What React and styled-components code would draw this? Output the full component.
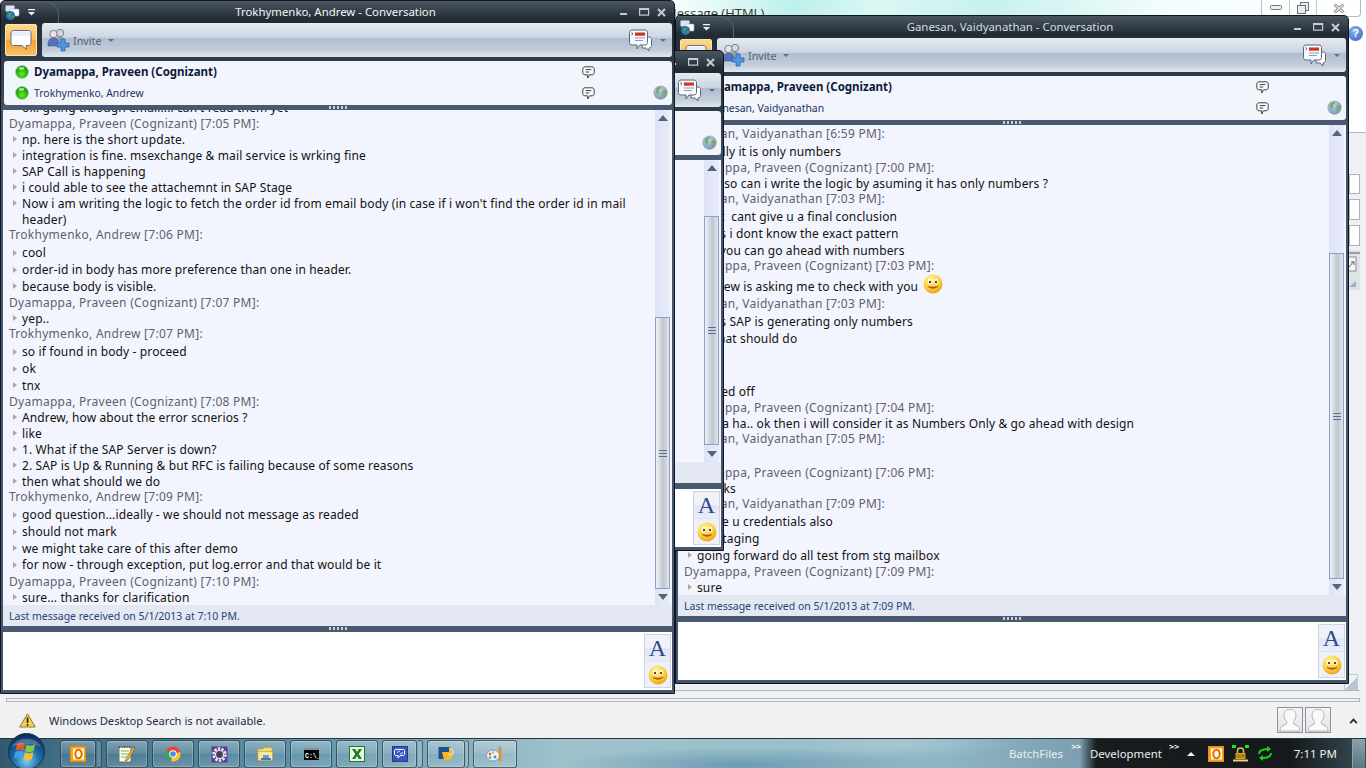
import React from "react";
import styled, { createGlobalStyle } from "styled-components";

const Global = createGlobalStyle`
  html, body { margin: 0; padding: 0; background: #f0f1f3; overflow: hidden; }
  * { box-sizing: border-box; }
  body { font-family: "Noto Sans", "DejaVu Sans", sans-serif; font-size: 12px; }
`;

const Desktop = styled.div`
  width: 1366px; height: 768px; display: flex; flex-direction: column; overflow: hidden;
`;
const Stage = styled.div`
  position: relative; height: 694px; display: flex; flex-direction: column; background: #eef0f3;
`;
const BackHeader = styled.header`
  height: 43px; display: flex; justify-content: space-between; align-items: flex-start;
  background: linear-gradient(100deg, #ffffff 48%, #bdf0ec 58%, #dcf8f5 64%, #c7f1ee 72%, #f2fdfc 85%, #ffffff 100%);
`;
const BackTitle = styled.span`
  margin: 4px 0 0 665px; font: 13px "Open Sans", sans-serif; color: #333;
`;
const BackControls = styled.div`
  display: flex; margin-right: 5px; height: 17px; border: 1px solid #b6bcc4; border-top: 0; border-radius: 0 0 4px 4px;
  background: rgba(255,255,255,.45);
`;
const BackControl = styled.span`
  width: ${p => p.$w}px; display: flex; align-items: center; justify-content: center;
  border-left: ${p => (p.$first ? "0" : "1px solid #c2c8cf")};
`;
const BackHelp = styled.div`
  display: flex; justify-content: flex-end; height: 90px; padding: 0 3px 0 0; background: #fff; border-bottom: 1px solid #b3b8bd;
`;
const HelpDot = styled.span`
  margin-top: -17px; width: 15px; height: 15px; border-radius: 50%; color: #fff; font: bold 11px/15px "Liberation Sans", sans-serif;
  text-align: center; background: radial-gradient(circle at 40% 30%, #8fb3ee, #2f5fbd);
`;
const BackFields = styled.div`
  flex: 1; display: flex; flex-direction: column; align-items: flex-end; gap: 5px; padding: 41px 6px 0 0;
`;
const BackField = styled.span`
  width: 11px; height: ${p => p.$h}px; background: #fff; border: 1px solid #aeb2b6;
`;
const BackTool = styled.span`
  display: flex; width: 12px; height: 40px; margin-top: -1px;
`;
const BackCorner = styled.div`
  display: flex; justify-content: flex-end; align-items: flex-end; padding: 0 2px 0 0; height: 18px; border-bottom: 1px solid #b0b5ba; margin: 0 6px 3px 0;
`;
const CornerBtn = styled.span`
  width: 14px; height: 16px; background: linear-gradient(135deg, #eef0f3 55%, #b9c4d6 56%); border: 1px solid #c4c8cd;
`;

/* Conversation window */
const Win = styled.section`
  position: absolute; left: ${p => p.$left}px; top: ${p => p.$top}px; width: ${p => p.$w}px; height: ${p => p.$h}px;
  z-index: ${p => p.$z}; display: flex; flex-direction: column; padding: 0 2px 3px;
  border: 1px solid #10151b; border-radius: 5px 5px 0 0;
  background: linear-gradient(#4a5661 0, #232c34 18px, #2b3744 50px, #44556d 120px, #44556d 100%);
`;
const TitleBar = styled.div`
  height: 22px; display: grid; grid-template-columns: 1fr auto 1fr; align-items: center; color: #fff; position: relative;
`;
const TitleLeft = styled.div`
  display: flex; align-items: center; gap: 7px; padding-left: 2px; height: 22px; width: 56px;
  border-right: 1px solid #55616d; border-top: 1px solid #55616d; border-radius: 0 14px 0 0; border-bottom: 0;
`;
const TitleText = styled.span`
  font-size: 11.4px; margin: 0 4px 2px 0; color: ${p => (p.$dim ? "#d5dbe2" : "#f4f6f8")};
`;
const Controls = styled.div`
  display: flex; justify-content: flex-end; align-items: center; gap: 7px; padding-right: 6px;
  & > :first-child { margin-right: 4px; }
`;
const ToolRow = styled.div`
  height: 34px; display: flex; gap: 5px; padding-left: 2px;
`;
const OrangeBtn = styled.button`
  width: 32px; height: 32px; margin-top: 1px; padding: 0; border: 1px solid #f9e4b8; border-radius: 2px; display: flex; align-items: center; justify-content: center;
  background: linear-gradient(#fdd78f 0, #fbc05a 45%, #f6a22c 55%, #f9c068 100%);
`;
const ToolBar = styled.div`
  flex: 1; display: flex; align-items: center; padding: 0 6px 0 5px; border-radius: 3px;
  background: linear-gradient(#e6ebf2 0, #ccd5e1 42%, #b0bdce 46%, #c3cedb 80%, #e2e7ee 100%);
`;
const InviteLabel = styled.span`
  margin: 0 6px 0 3px; color: #566272; font-size: 10.8px;
`;
const Spacer = styled.span` flex: 1; `;
const Caret = styled.span`
  width: 0; height: 0; border-left: 3px solid transparent; border-right: 3px solid transparent; border-top: 3px solid ${p => p.$c || "#5f6f86"};
`;
const LogBtn = styled.span` display: flex; margin-right: 7px; `;
const Participants = styled.div`
  height: 44px; margin: 4px 0 0 1px; display: flex; background: #f3f5fd; border-radius: 3px; padding: 0 4px 2px 11px; align-items: flex-end;
`;
const PList = styled.div`
  flex: 1; padding: 0 58px 0 0; display: flex; flex-direction: column;
`;
const PRow = styled.div`
  height: 21px; display: flex; align-items: center; gap: 5px;
`;
const PName = styled.span`
  flex: 1; font-size: ${p => (p.$b ? "11.5px" : "10.4px")}; font-weight: ${p => (p.$b ? 700 : 400)}; color: ${p => (p.$b ? "#0e1a3c" : "#22325e")};
`;
const BubbleWrap = styled.span` display: flex; margin-top: 2px; `;
const GlobeWrap = styled.span` display: flex; margin-bottom: 3px; `;
const Grabber = styled.div`
  height: ${p => p.$h}px; display: flex; justify-content: center; background: #49596f;
`;
const GrabDots = styled.span`
  width: 18px; height: 3px; margin-top: 1px;
  background: repeating-linear-gradient(90deg, #c6cfdb 0 2px, transparent 2px 4px);
`;
const Transcript = styled.div`
  flex: 1; min-height: 0; display: flex; background: #f3f5fe; padding-right: 2px;
`;
const Lines = styled.div`
  flex: 1; min-width: 0; overflow: hidden; display: flex; flex-direction: column; justify-content: flex-end; padding-left: 6px;
`;
const Sender = styled.div`
  flex: none; height: ${p => p.$h}px; line-height: ${p => (p.$h === 16 ? 16 : 15)}px; font-size: 12px; letter-spacing: .27px; color: #5f5f6e; white-space: nowrap;
  padding-top: ${p => (p.$h === 16 ? 1 : 0)}px;
`;
const Line = styled.div`
  flex: none; height: ${p => p.$h}px; display: flex; align-items: center; padding-left: 13px; white-space: pre; color: #111; font-size: 12px; letter-spacing: .125px;
  position: relative; gap: 3px;
  &::before {
    content: ""; position: absolute; left: 4px; top: 50%; margin-top: -3px; display: ${p => (p.$cont ? "none" : "block")};
    border-left: 4px solid #a3a7ae; border-top: 3px solid transparent; border-bottom: 3px solid transparent;
  }
`;
const Scroll = styled.div`
  flex: none; width: 15px; display: flex; flex-direction: column; align-items: stretch;
  background: linear-gradient(90deg, #dde3f6, #e9ecf9);
`;
const ScrollArrow = styled.span`
  flex: none; height: 16px; display: flex; align-items: center; justify-content: center;
`;
const Tri = styled.span`
  width: 0; height: 0; border-left: 5px solid transparent; border-right: 5px solid transparent;
  ${p => (p.$up ? "border-bottom: 6px solid #56647a;" : "border-top: 6px solid #56647a;")}
`;
const Thumb = styled.div`
  margin-top: ${p => p.$top}px; height: ${p => p.$h}px; border: 1px solid #8c9fc6; display: flex; align-items: center; justify-content: center;
  background: linear-gradient(90deg, #f0f1f4, #c9ced8 45%, #c1c7d2 60%, #e4e6ec);
`;
const Grip = styled.span`
  width: 8px; height: 7px; background: repeating-linear-gradient(#5d6c96 0 1px, transparent 1px 3px);
`;
const ScrollFill = styled.span` flex: 1; `;
const StatusBar = styled.div`
  height: 21px; display: flex; align-items: center; padding-left: 6px; background: #e3e8f3; color: #2b4275; font-size: 10.5px;
`;
const InputBox = styled.div`
  height: 58px; flex: none; display: flex; justify-content: flex-end; align-items: center; padding-right: 1px; background: #fff;
`;
const SideTools = styled.div`
  width: 27px; height: 54px; display: flex; flex-direction: column; border: 1px solid #cfd4e3; background: #eef1fb;
`;
const SideA = styled.span`
  height: 27px; display: flex; align-items: center; justify-content: center; color: #2f4a8c;
  font: 24px/27px "Liberation Serif", serif; border-bottom: 1px solid #dfe3f0;
  background: linear-gradient(#f0f2fb 0, #f0f2fb 50%, #e2e5f4 52%, #eaedf8 100%);
`;
const SideSmile = styled.span`
  flex: 1; display: flex; align-items: center; justify-content: center;
`;
const InlineSmile = styled.span` display: inline-flex; margin-left: 2px; margin-top: -4px; `;

/* Notification bar */
const Notify = styled.div`
  height: 44px; position: relative; display: flex; align-items: center; padding: 8px 9px 0 19px; background: #f0f1f3;
`;
const NotifyRule = styled.span`
  position: absolute; left: 6px; right: 6px; top: 4px; height: 4px; background: #eceef0; border: 1px solid #b3b8bd;
`;
const NotifyText = styled.span`
  margin-left: 13px; flex: 1; font-size: 11.2px; color: #1f2b4a;
`;
const Avatar = styled.span`
  width: 26px; height: 26px; margin-left: 2px; display: flex; border: 1px solid #8e9296; background: linear-gradient(#f4f5f6, #e2e3e5);
`;
const Chevron = styled.span`
  margin: 0 0 0 19px; width: 7px; height: 7px; border-left: 2px solid #222; border-top: 2px solid #222; transform: translateY(2px) rotate(45deg) scale(.8);
`;

/* Taskbar */
const Taskbar = styled.footer`
  height: 30px; display: flex; align-items: stretch; padding-left: 8px; border-top: 1px solid #28333a; position: relative;
  background:
    radial-gradient(ellipse 180px 18px at 740px 26px, rgba(70,125,160,.55), transparent),
    radial-gradient(ellipse 120px 14px at 900px 5px, rgba(200,225,230,.4), transparent),
    linear-gradient(90deg, #33596c 0, #3f6f86 60px, #5f93ab 300px, #9fc2cb 560px, #9cc0cb 760px, #8db4c3 950px, #7d9fb1 1080px, #171c1e 1096px, #15191b 1290px, #2e3f45 1345px, #3c565f 1366px);
`;
const Orb = styled.span`
  flex: none; position: relative; z-index: 2; width: 37px; height: 37px; margin: -6px 15px -1px 0; display: flex;
`;
const TaskBtn = styled.span`
  flex: none; width: ${p => p.$w}px; margin: 1px 4px 0 0; display: flex; align-items: center; justify-content: center;
  border: 1px solid rgba(20,40,50,.65); border-radius: 3px;
  background: linear-gradient(rgba(255,255,255,.32), rgba(255,255,255,.12) 48%, rgba(255,255,255,.04) 52%, rgba(255,255,255,.16));
  box-shadow: inset 0 0 0 1px rgba(255,255,255,.22);
`;
const Sliver = styled.span`
  flex: none; width: ${p => p.$w}px; margin: 1px 4px 0 -3px; border: 1px solid rgba(20,40,50,.6); border-left: 0; border-radius: 0 3px 3px 0;
  background: rgba(255,255,255,.16);
`;
const Tray = styled.div`
  margin-left: auto; display: flex; align-items: center; color: #e8eef1; font-size: 11.4px;
`;
const Band = styled.span``;
const More = styled.span`
  align-self: flex-start; width: 8px; margin: 3px ${p => p.$r}px 0 ${p => p.$l}px; font: bold 7px/10px "DejaVu Sans", sans-serif; color: #fff; letter-spacing: -1px; white-space: nowrap;
`;
const TrayIcon = styled.span` display: flex; margin-left: ${p => p.$l}px; `;
const TrayUp = styled.span`
  width: 0; height: 0; border-left: 4px solid transparent; border-right: 4px solid transparent; border-bottom: 4px solid #f2f4f5;
`;
const Clock = styled.span` margin-left: 21px; font-size: 11.5px; color: #eef2f4; `;
const ShowDesktop = styled.span`
  width: 14px; height: 100%; margin-left: 15px; border-left: 1px solid #8da4ad; border-right: 1px solid #3b4d55;
  background: linear-gradient(rgba(210,230,235,.55), rgba(120,160,175,.5));
`;

/* Icons */
const Smiley = ({ s = 20 }) => (
  <svg width={s} height={s} viewBox="0 0 20 20">
    <defs>
      <radialGradient id="smy" cx=".4" cy=".3" r=".8">
        <stop offset="0" stopColor="#fff59a" /><stop offset=".55" stopColor="#fbd23a" /><stop offset="1" stopColor="#e8920f" />
      </radialGradient>
    </defs>
    <circle cx="10" cy="10" r="9.5" fill="url(#smy)" />
    <ellipse cx="6.8" cy="7.4" rx="2" ry="2.6" fill="#fff" /><ellipse cx="13.2" cy="7.4" rx="2" ry="2.6" fill="#fff" />
    <circle cx="7" cy="8" r="1.2" fill="#6b3a10" /><circle cx="13" cy="8" r="1.2" fill="#6b3a10" />
    <path d="M4.4 11.5c1 4.2 10.2 4.2 11.2 0-2 1.6-9.2 1.6-11.2 0z" fill="#b5561a" />
  </svg>
);
const Dot = () => (
  <svg width="14" height="14" viewBox="0 0 14 14">
    <defs>
      <radialGradient id="grn" cx=".5" cy=".65" r=".6">
        <stop offset="0" stopColor="#6fe82c" /><stop offset=".7" stopColor="#1fb00a" /><stop offset="1" stopColor="#0f8206" />
      </radialGradient>
    </defs>
    <circle cx="7" cy="7" r="6.5" fill="url(#grn)" stroke="#a8dc98" strokeWidth=".8" />
    <ellipse cx="6.5" cy="3.4" rx="3" ry="1.4" fill="#d8f7c8" opacity=".75" />
  </svg>
);
const SmallBubble = () => (
  <svg width="13" height="13" viewBox="0 0 13 13" fill="none" stroke="#3e4144" strokeWidth="1">
    <path d="M3 .8h7c1.3 0 2.2.9 2.2 2.2v3.6c0 1.3-.9 2.2-2.2 2.200H7.600L5.700 12V8.800H3C1.700 8.800.8 7.900.8 6.600V3C.8 1.700 1.700.8 3 .8z" fill="#fbfcfe" />
    <path d="M3.600 3.600h5.800M3.600 6h3.600" />
  </svg>
);
const Globe = ({ s = 15 }) => (
  <svg width={s} height={s} viewBox="0 0 16 16">
    <defs>
      <radialGradient id="glb" cx=".4" cy=".3" r=".8">
        <stop offset="0" stopColor="#c3d3e8" /><stop offset="1" stopColor="#6f8fb4" />
      </radialGradient>
    </defs>
    <circle cx="8" cy="8" r="7.600" fill="url(#glb)" />
    <path d="M3 4c2-2 4-2.500 6-2.500L8 4 6 5.500l1 2-2 3-2-2.500zM10 6l4-1 1 3-2 4-2 1-1-3z" fill="#7fa96e" />
  </svg>
);
const AppIcon = () => (
  <svg width="16" height="16" viewBox="0 0 16 16">
    <rect x="0.500" y="0.500" width="9" height="6" rx="1" fill="#dfe6ee" stroke="#8fa0b4" strokeWidth=".6" />
    <rect x="5" y="4" width="9" height="7" rx="1" fill="#fafcff" stroke="#9fb0c4" strokeWidth=".6" />
    <circle cx="5.500" cy="10.500" r="4.500" fill="#2a6cc4" />
    <path d="M3 8.500l3-1 1 2-2 2 1 2-2-1zM7 11l2-.5v2l-1.500 1.200z" fill="#3fae3a" />
  </svg>
);
const MenuGlyph = () => (
  <svg width="7" height="9" viewBox="0 0 7 9" fill="#eef2f5"><rect x="0" y="1" width="7" height="1.300" /><path d="M0 4h7L3.500 7.500z" /></svg>
);
const Speech = () => (
  <svg width="22" height="22" viewBox="0 0 22 22">
    <path d="M3.500 1.500h15c1.400 0 2.500 1.100 2.500 2.500v10c0 1.400-1.100 2.500-2.500 2.500H16l.5 4-4.500-4H3.500C2.100 16.500 1 15.400 1 14V4c0-1.400 1.100-2.500 2.500-2.500z" fill="#fff" stroke="#5f7188" strokeWidth="1" />
    <path d="M3.500 2.500h15c.8 0 1.500.7 1.500 1.500v3H2V4c0-.8.7-1.500 1.500-1.500z" fill="#e8eef8" />
  </svg>
);
const Invite = () => (
  <svg width="23" height="24" viewBox="0 0 23 24">
    <circle cx="13" cy="5" r="3.700" fill="#d4d8dc" stroke="#6d7680" strokeWidth=".9" />
    <path d="M8 15c0-4 2-5.500 5-5.500s5 1.500 5 5v2H8z" fill="#9aa3ad" stroke="#6d7680" strokeWidth=".6" />
    <circle cx="6.500" cy="6" r="3.700" fill="#e2e5e8" stroke="#6d7680" strokeWidth=".9" />
    <path d="M1 17c0-4.500 2-7 5.500-7s5.500 2.500 5.500 7v1H1z" fill="#5672b4" stroke="#3e5590" strokeWidth=".6" />
    <path d="M14 11h4v4h4v4h-4v4h-4v-4h-4v-4h4z" fill="#4f95e0" stroke="#2b66b2" strokeWidth=".8" />
  </svg>
);
const LogIcon = () => (
  <svg width="24" height="23" viewBox="0 0 24 23">
    <path d="M14 8h6c1.500 0 2.500 1 2.500 2.500v6c0 1.500-1 2.500-2.500 2.500v3l-3-3h-4z" fill="#fff" stroke="#56687f" />
    <path d="M3 1h13c1.500 0 2.500 1 2.500 2.500v10c0 1.500-1 2.500-2.500 2.500h-5l-3 4v-4H3c-1.500 0-2.500-1-2.500-2.500v-10C.5 2 1.500 1 3 1z" fill="#f6f8fd" stroke="#56687f" />
    <rect x="6" y="3.500" width="10" height="3.200" fill="#c9391e" />
    <path d="M6 9h10M6 11.500h8" stroke="#8c9cc0" />
    <path d="M2.500 3.500l1.500 1.200-1.500 1.200" fill="none" stroke="#333" strokeWidth=".8" />
  </svg>
);
const MinI = () => <svg width="8" height="8" viewBox="0 0 8 8"><rect y="5" width="7" height="2" fill="#c6ccd3" /></svg>;
const MaxI = () => <svg width="11" height="8" viewBox="0 0 11 8" fill="none"><rect x=".6" y=".6" width="9" height="6.500" stroke="#c6ccd3" strokeWidth="1.200" /><rect x="0" y="0" width="10" height="2" fill="#c6ccd3" /></svg>;
const CloseI = () => <svg width="9" height="9" viewBox="0 0 9 9"><path d="M1 1l7 7M8 1L1 8" stroke="#c6ccd3" strokeWidth="2" /></svg>;
const Warn = () => (
  <svg width="17" height="15" viewBox="0 0 17 15">
    <path d="M8.500.8L16.300 14H.7z" fill="#f6cf4e" stroke="#8a7a3a" strokeWidth="1" strokeLinejoin="round" />
    <rect x="7.700" y="4.500" width="1.700" height="5.500" fill="#222" /><rect x="7.700" y="11" width="1.700" height="1.700" fill="#222" />
  </svg>
);
const Person = () => (
  <svg width="24" height="24" viewBox="0 0 24 24">
    <path d="M2 23c0-4 3-5.500 6.500-7v-2.500C6.500 11 6 9 6 7c0-3.500 2.500-5.500 6-5.500S18 3.500 18 7c0 2-.5 4-2.500 6.500V16c3.500 1.500 6.500 3 6.500 7z" fill="#fafafa" stroke="#b4b6b9" />
  </svg>
);
const StartOrb = () => (
  <svg width="37" height="37" viewBox="0 0 37 37">
    <defs>
      <radialGradient id="orb" cx=".5" cy=".75" r=".7">
        <stop offset="0" stopColor="#7fd0f2" /><stop offset=".5" stopColor="#1f6fb0" /><stop offset="1" stopColor="#0c2f5a" />
      </radialGradient>
    </defs>
    <circle cx="18.500" cy="18.500" r="18" fill="url(#orb)" stroke="#16344c" strokeWidth="1" />
    <path d="M9 11c3-1.500 5-1.500 8 0l-1.400 6.500c-3-1.500-5-1.500-8 0z" fill="#e8562a" />
    <path d="M18.500 11.500c3 1.500 5 1.500 8.500 0l-1.400 6.500c-3.500 1.500-5.500 1.500-8.500 0z" fill="#8cc63f" />
    <path d="M7.300 19c3-1.500 5-1.500 8 0L14 25.500c-3-1.500-5-1.500-8 0z" fill="#3aa4e8" />
    <path d="M16.800 19.500c3 1.500 5 1.500 8.500 0L24 26c-3.500 1.500-5.500 1.500-8.500 0z" fill="#f9c21d" />
    <path d="M4 14c4-11 25-11 29 0-8-4-21-4-29 0z" fill="#fff" opacity=".22" />
  </svg>
);
const Outlook = ({ s = 16 }) => (
  <svg width={s} height={s} viewBox="0 0 16 16">
    <rect x=".5" y=".5" width="15" height="15" fill="#f9a51a" stroke="#e98a0a" />
    <rect x="3" y="2.500" width="11" height="11" fill="#fff7e0" />
    <ellipse cx="8.500" cy="8" rx="3.200" ry="4.300" fill="none" stroke="#d96f0a" strokeWidth="2" />
  </svg>
);
const Notepad = () => (
  <svg width="18" height="18" viewBox="0 0 18 18">
    <rect x="1" y="2" width="12" height="15" fill="#fafcf2" stroke="#6c7560" />
    <path d="M3 6h8M3 9h8M3 12h6" stroke="#7ab648" />
    <path d="M1.500 1v2M4 1v2M6.500 1v2M9 1v2M11.500 1v2" stroke="#555" />
    <path d="M8 14l7-12 2 1-7 12-3 1z" fill="#f2b13a" stroke="#8c5a12" strokeWidth=".6" />
    <path d="M15 2l.6-1 1.800 1-.5 1z" fill="#d43a2a" />
  </svg>
);
const Chrome = () => (
  <svg width="16" height="16" viewBox="0 0 16 16">
    <circle cx="8" cy="8" r="7.500" fill="#e8443a" />
    <path d="M8 8L1.200 4.500A7.500 7.500 0 0 0 6 15.300z" fill="#3aa655" />
    <path d="M8 8l7.200-2A7.500 7.500 0 0 1 6 15.300z" fill="#fbc72d" />
    <circle cx="8" cy="8" r="3.800" fill="#fff" /><circle cx="8" cy="8" r="2.800" fill="#4a8af0" />
  </svg>
);
const Gear = () => (
  <svg width="17" height="17" viewBox="0 0 17 17">
    <rect x=".5" y=".5" width="16" height="16" fill="#5a3c96" />
    <circle cx="8.500" cy="8.500" r="6" fill="none" stroke="#eee" strokeWidth="2.500" strokeDasharray="2.400 1.300" />
    <circle cx="8.500" cy="8.500" r="4.600" fill="#eee" /><circle cx="8.500" cy="8.500" r="3.400" fill="#3f3f5a" />
  </svg>
);
const Folder = () => (
  <svg width="17" height="16" viewBox="0 0 17 16">
    <path d="M1 3h5l1.500-1.500H15V14H1z" fill="#f4d978" stroke="#c4a23c" strokeWidth=".7" />
    <path d="M1 5.500h14.500V14.500H1z" fill="#fae79a" stroke="#c4a23c" strokeWidth=".7" />
    <rect x="6" y="9" width="6" height="4" fill="#5aa2d8" /><rect x="4" y="12" width="10" height="2" fill="#3a7fb8" />
  </svg>
);
const Cmd = () => (
  <svg width="15" height="12" viewBox="0 0 15 12">
    <rect width="15" height="12" fill="#050505" /><rect width="15" height="2" fill="#8a9099" />
    <text x="1" y="9.500" fontSize="6.500" fontFamily="Liberation Mono, monospace" fontWeight="700" fill="#fff">C:\_</text>
  </svg>
);
const Excel = () => (
  <svg width="16" height="16" viewBox="0 0 16 16">
    <rect x=".5" y=".5" width="15" height="15" fill="#e9f3e6" stroke="#1f7a2e" />
    <path d="M3 3h3.200L8 6l1.800-3H13L9.700 8 13 13H9.800L8 10l-1.800 3H3l3.300-5z" fill="#1f7a2e" />
  </svg>
);
const Comm = () => (
  <svg width="16" height="16" viewBox="0 0 16 16">
    <rect x=".5" y=".5" width="15" height="15" fill="#3a56bf" stroke="#25398c" />
    <path d="M4 3.500h7c1 0 1.500.5 1.500 1.500v3c0 1-.5 1.500-1.500 1.500H8L6 12V9.500H4C3 9.500 2.500 9 2.500 8V5C2.500 4 3 3.500 4 3.500z" fill="none" stroke="#fff" />
    <path d="M5 6.500l3-1.500M11 6.500L8 8" stroke="#cfe0ff" />
  </svg>
);
const Plug = () => (
  <svg width="16" height="16" viewBox="0 0 16 16">
    <rect x=".5" y="1" width="11" height="12" fill="#1d4f8f" />
    <path d="M4 6h7V2l4 1v6c0 3-2 5-6 5H6z" fill="#f7b91e" />
    <path d="M11 3a3 3 0 1 1-1 5" fill="none" stroke="#ddd" strokeWidth="1.200" />
  </svg>
);
const Palette = () => (
  <svg width="18" height="16" viewBox="0 0 18 16">
    <ellipse cx="7" cy="9.500" rx="6.500" ry="5.500" fill="#eaf2f5" stroke="#7f97b4" />
    <circle cx="4" cy="8" r="1.200" fill="#e8443a" /><circle cx="7" cy="6.500" r="1.200" fill="#f2b13a" />
    <circle cx="4" cy="11.500" r="1.200" fill="#4fae4a" /><circle cx="9" cy="11" r="1.400" fill="#4a8af0" />
    <path d="M12.500 4h3l-.5 11c-.5.800-1.500.800-2 0z" fill="#f28a1c" /><rect x="12.500" y=".5" width="3" height="3.500" fill="#b79a6a" />
  </svg>
);
const Lock = () => (
  <svg width="17" height="17" viewBox="0 0 17 17">
    <rect x="0" y="0" width="4" height="3" fill="#22e022" /><rect x="13" y="0" width="4" height="3" fill="#22e022" />
    <path d="M5.500 8V5.500c0-3.500 6-3.500 6 0V8" fill="none" stroke="#d8c060" strokeWidth="1.500" />
    <rect x="3.500" y="8" width="10" height="6" fill="#e2a81f" /><path d="M4 10h9M4 12h9" stroke="#7a5a10" />
    <rect x="1" y="14.500" width="15" height="2" fill="#e9d468" />
  </svg>
);
const Sync = () => (
  <svg width="16" height="15" viewBox="0 0 16 15" fill="none" stroke="#16d316" strokeWidth="2">
    <path d="M2 8c0-4 4-5 9-5" /><path d="M14 7c0 4-4 5-9 5" />
    <path d="M10 0l4 3-4 3zM6 9l-4 3 4 3z" fill="#16d316" stroke="none" />
  </svg>
);
const MiniMin = () => <svg width="12" height="6" viewBox="0 0 12 6"><rect x=".5" y=".5" width="11" height="4" rx="1" fill="#eef0f2" stroke="#767a80" /></svg>;
const MiniRestore = () => <svg width="12" height="12" viewBox="0 0 12 12" fill="#e9ecee" stroke="#6e7278"><rect x="3.500" y=".5" width="8" height="8" /><rect x=".5" y="3.500" width="8" height="8" /></svg>;
const MiniClose = () => <svg width="12" height="11" viewBox="0 0 12 11"><path d="M1.500 1.500l9 8M10.500 1.500l-9 8" stroke="#777" strokeWidth="3" /><path d="M1.500 1.500l9 8M10.500 1.500l-9 8" stroke="#eee" strokeWidth="1.200" /></svg>;
const ToolGlyphs = () => (
  <svg width="12" height="40" viewBox="0 0 12 40">
    <rect width="12" height="40" fill="#dfe2e6" />
    <rect x="1" y="2" width="11" height="2" fill="#9a9ea3" />
    <rect x="0" y="7" width="8" height="14" fill="#f5f6f7" stroke="#8c9095" />
    <path d="M1 17l5-6M3 12h3v3" stroke="#666" fill="none" />
    <path d="M1 37l7-6v6z" fill="#9fb0cc" />
  </svg>
);

const D = "Dyamappa, Praveen (Cognizant)";
const T = "Trokhymenko, Andrew";
const G = "Ganesan, Vaidyanathan";

const andrewLog = [
  ["l", "ok. going through email...i can't read them yet", 16],
  ["s", `${D} [7:05 PM]:`, 16],
  ["l", "np. here is the short update.", 16],
  ["l", "integration is fine. msexchange & mail service is wrking fine", 16],
  ["l", "SAP Call is happening", 16],
  ["l", "i could able to see the attachemnt in SAP Stage", 16],
  ["l", "Now i am writing the logic to fetch the order id from email body (in case if i won't find the order id in mail", 16],
  ["c", "header)", 16],
  ["s", `${T} [7:06 PM]:`, 17],
  ["l", "cool", 17],
  ["l", "order-id in body has more preference than one in header.", 17],
  ["l", "because body is visible.", 16],
  ["s", `${D} [7:07 PM]:`, 16],
  ["l", "yep..", 16],
  ["s", `${T} [7:07 PM]:`, 17],
  ["l", "so if found in body - proceed", 17],
  ["l", "ok", 17],
  ["l", "tnx", 16],
  ["s", `${D} [7:08 PM]:`, 16],
  ["l", "Andrew, how about the error scnerios ?", 16],
  ["l", "like", 16],
  ["l", "1. What if the SAP Server is down?", 16],
  ["l", "2. SAP is Up & Running & but RFC is failing because of some reasons", 16],
  ["l", "then what should we do", 16],
  ["s", `${T} [7:09 PM]:`, 17],
  ["l", "good question...ideally - we should not message as readed", 17],
  ["l", "should not mark", 17],
  ["l", "we might take care of this after demo", 16],
  ["l", "for now - through exception, put log.error and that would be it", 17],
  ["s", `${D} [7:10 PM]:`, 16],
  ["l", "sure... thanks for clarification", 16],
];

const ganesanLog = [
  ["s", `${G} [6:59 PM]:`, 17],
  ["l", "Ideally it is only numbers", 16],
  ["s", `${D} [7:00 PM]:`, 16],
  ["l", "ok... so can i write the logic by asuming it has only numbers ?", 16],
  ["s", `${G} [7:03 PM]:`, 17],
  ["l", "right\u00a0\u00a0cant give u a final conclusion", 17],
  ["l", "so as i dont know the exact pattern", 17],
  ["l", "but you can go ahead with numbers", 16],
  ["s", `${D} [7:03 PM]:`, 18],
  ["i", "andrew is asking me to check with you", 20],
  ["s", `${G} [7:03 PM]:`, 17],
  ["l", "so as SAP is generating only numbers", 17],
  ["l", "so that should do", 17],
  ["l", "ok", 18],
  ["l", "bye", 18],
  ["l", "signed off", 16],
  ["s", `${D} [7:04 PM]:`, 16],
  ["l", "ha ha ha.. ok then i will consider it as Numbers Only & go ahead with design", 16],
  ["s", `${G} [7:05 PM]:`, 17],
  ["l", "ok", 16],
  ["s", `${D} [7:06 PM]:`, 16],
  ["l", "thanks", 16],
  ["s", `${G} [7:09 PM]:`, 17],
  ["l", "share u credentials also", 17],
  ["l", "it's staging", 17],
  ["l", "going forward do all test from stg mailbox", 16],
  ["s", `${D} [7:09 PM]:`, 16],
  ["l", "sure", 16],
];

const LogRow = ({ row: [kind, text, h] }) => {
  if (kind === "s") return <Sender $h={h}>{text}</Sender>;
  return (
    <Line $h={h} $cont={kind === "c"}>
      {text}
      {kind === "i" && <InlineSmile><Smiley s={20} /></InlineSmile>}
    </Line>
  );
};

const ChatWindow = ({ left, top, w, h, z, title, people, log, thumbTop, thumbH, status }) => (
  <Win $left={left} $top={top} $w={w} $h={h} $z={z}>
    <TitleBar>
      <TitleLeft><AppIcon /><MenuGlyph /></TitleLeft>
      <TitleText $dim={z === 1}>{title}</TitleText>
      <Controls><MinI /><MaxI /><CloseI /></Controls>
    </TitleBar>
    <ToolRow>
      <OrangeBtn aria-label="Conversation"><Speech /></OrangeBtn>
      <ToolBar>
        <Invite />
        <InviteLabel>Invite</InviteLabel>
        <Caret />
        <Spacer />
        <LogBtn><LogIcon /></LogBtn>
        <Caret />
      </ToolBar>
    </ToolRow>
    <Participants>
      <PList>
        {people.map((p, i) => (
          <PRow key={p}>
            <Dot />
            <PName $b={i === 0}>{p}</PName>
            <BubbleWrap><SmallBubble /></BubbleWrap>
          </PRow>
        ))}
      </PList>
      <GlobeWrap><Globe /></GlobeWrap>
    </Participants>
    <Grabber $h={5}><GrabDots /></Grabber>
    <Transcript>
      <Lines>{log.map((r, i) => <LogRow key={i} row={r} />)}</Lines>
      <Scroll>
        <ScrollArrow><Tri $up /></ScrollArrow>
        <Thumb $top={thumbTop} $h={thumbH}><Grip /></Thumb>
        <ScrollFill />
        <ScrollArrow><Tri /></ScrollArrow>
      </Scroll>
    </Transcript>
    <StatusBar>{status}</StatusBar>
    <Grabber $h={6}><GrabDots /></Grabber>
    <InputBox>
      <SideTools>
        <SideA>A</SideA>
        <SideSmile><Smiley /></SideSmile>
      </SideTools>
    </InputBox>
  </Win>
);

export default function App() {
  return (
    <Desktop>
      <Global />
      <Stage>
        <BackHeader>
          <BackTitle>Message (HTML)</BackTitle>
          <BackControls>
            <BackControl $w={27} $first><MiniMin /></BackControl>
            <BackControl $w={27}><MiniRestore /></BackControl>
            <BackControl $w={44}><MiniClose /></BackControl>
          </BackControls>
        </BackHeader>
        <BackHelp><HelpDot>?</HelpDot></BackHelp>
        <BackFields>
          <BackField $h={20} />
          <BackField $h={21} />
          <BackField $h={21} />
          <BackTool><ToolGlyphs /></BackTool>
        </BackFields>
        <BackCorner><CornerBtn /></BackCorner>
        <ChatWindow left={675} top={15} w={674} h={669} z={1} title={`${G} - Conversation`} people={[D, G]} log={ganesanLog} thumbTop={112} thumbH={327} status="Last message received on 5/1/2013 at 7:09 PM." />
        <ChatWindow left={60} top={50} w={664} h={501} z={2} title="" people={[D, T]} log={[]} thumbTop={40} thumbH={229} status="" />
        <ChatWindow left={0} top={0} w={675} h={694} z={3} title={`${T} - Conversation`} people={[D, T]} log={andrewLog} thumbTop={191} thumbH={273} status="Last message received on 5/1/2013 at 7:10 PM." />
      </Stage>
      <Notify>
        <NotifyRule />
        <Warn />
        <NotifyText>Windows Desktop Search is not available.</NotifyText>
        <Avatar><Person /></Avatar>
        <Avatar><Person /></Avatar>
        <Chevron />
      </Notify>
      <Taskbar>
        <Orb><StartOrb /></Orb>
        <TaskBtn $w={36}><Outlook /></TaskBtn><Sliver $w={5} />
        <TaskBtn $w={42}><Notepad /></TaskBtn>
        <TaskBtn $w={42}><Chrome /></TaskBtn>
        <TaskBtn $w={42}><Gear /></TaskBtn>
        <TaskBtn $w={42}><Folder /></TaskBtn>
        <TaskBtn $w={42}><Cmd /></TaskBtn>
        <TaskBtn $w={42}><Excel /></TaskBtn>
        <TaskBtn $w={35}><Comm /></TaskBtn><Sliver $w={5} />
        <TaskBtn $w={38}><Plug /></TaskBtn><Sliver $w={3} />
        <TaskBtn $w={44}><Palette /></TaskBtn>
        <Tray>
          <Band>BatchFiles</Band><More $l={8} $r={11}>{">>"}</More>
          <Band>Development</Band><More $l={7} $r={10}>{">>"}</More>
          <TrayUp />
          <TrayIcon $l={13}><Outlook /></TrayIcon>
          <TrayIcon $l={8}><Lock /></TrayIcon>
          <TrayIcon $l={8}><Sync /></TrayIcon>
          <Clock>7:11 PM</Clock>
          <ShowDesktop />
        </Tray>
      </Taskbar>
    </Desktop>
  );
}
